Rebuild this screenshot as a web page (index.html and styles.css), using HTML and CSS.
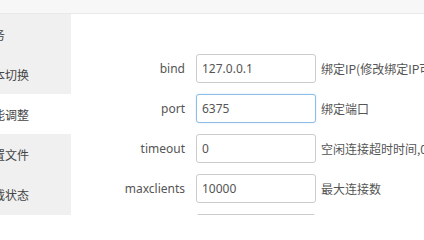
FILE: index.html
```html
<!DOCTYPE html>
<html lang="zh-CN">
<head>
<meta charset="utf-8">
<title>Redis 性能调整</title>
<link rel="stylesheet" href="styles.css">
</head>
<body>
<div class="topbar"></div>
<div class="layout">
  <nav class="sidebar">
    <div class="nav-item"><span class="nav-text">服务</span></div>
    <div class="nav-item"><span class="nav-text">版本切换</span></div>
    <div class="nav-item active"><span class="nav-text">性能调整</span></div>
    <div class="nav-item"><span class="nav-text">配置文件</span></div>
    <div class="nav-item"><span class="nav-text">负载状态</span></div>
  </nav>
  <main class="main">
    <div class="row">
      <label class="label">bind</label>
      <input class="field" type="text" value="127.0.0.1">
      <span class="desc">绑定IP(修改绑定IP可能会存在安全隐患)</span>
    </div>
    <div class="row">
      <label class="label">port</label>
      <input class="field focused" type="text" value="6375">
      <span class="desc">绑定端口</span>
    </div>
    <div class="row">
      <label class="label">timeout</label>
      <input class="field" type="text" value="0">
      <span class="desc">空闲连接超时时间,0表示不断开</span>
    </div>
    <div class="row">
      <label class="label">maxclients</label>
      <input class="field" type="text" value="10000">
      <span class="desc">最大连接数</span>
    </div>
    <div class="row">
      <label class="label">databases</label>
      <input class="field" type="text" value="16">
      <span class="desc">数据库数量</span>
    </div>
  </main>
</div>
</body>
</html>
```
FILE: styles.css
```css
html, body {
  margin: 0;
  padding: 0;
  background: #ffffff;
  overflow: hidden;
}
body {
  width: 424px;
  height: 215px;
  font-family: "Noto Sans", "Noto Sans CJK SC", sans-serif;
  font-size: 12px;
  color: #555555;
}
.topbar {
  height: 13px;
  background: #f7f7f7;
  border-bottom: 1px solid #e9e9e9;
}
.layout {
  display: flex;
}
.sidebar {
  width: 71px;
  flex: none;
  background: #f0f0f0;
  overflow: hidden;
  display: flex;
  flex-direction: column;
}
.nav-item {
  height: 40px;
  display: flex;
  align-items: center;
  white-space: nowrap;
  color: #444444;
}
.nav-item.active {
  background: #ffffff;
}
.nav-text {
  margin-left: -19px;
  font-family: "Noto Sans CJK SC", sans-serif;
  font-size: 12px;
}
.main {
  flex: 1;
  padding-top: 40px;
  display: flex;
  flex-direction: column;
  gap: 11px;
  overflow: hidden;
}
.row {
  display: flex;
  align-items: center;
  height: 29px;
  white-space: nowrap;
}
.label {
  width: 114px;
  flex: none;
  text-align: right;
  font-size: 12px;
  color: #555555;
}
.field {
  margin: 0 0 0 11px;
  width: 120px;
  height: 29px;
  flex: none;
  box-sizing: border-box;
  border: 1px solid #cccccc;
  border-radius: 3px;
  padding: 0 5px;
  font-family: "Noto Sans", sans-serif;
  font-size: 12px;
  color: #555555;
  background: #ffffff;
  outline: none;
}
.field.focused {
  border-color: #8fbde6;
  box-shadow: 0 0 2px rgba(102, 175, 233, 0.35);
}
.desc {
  margin-left: 5px;
  font-family: "Noto Sans CJK SC", sans-serif;
  font-size: 12px;
  color: #555555;
}
```
